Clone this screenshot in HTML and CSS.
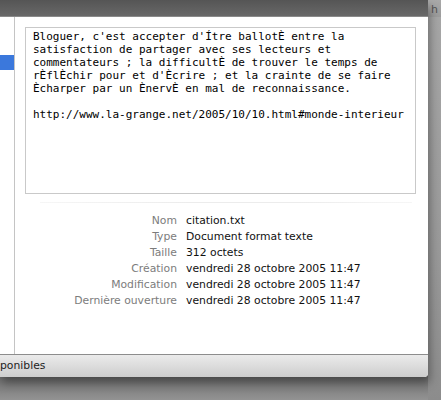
FILE: index.html
```html
<!DOCTYPE html>
<html lang="fr">
<head>
<meta charset="utf-8">
<title>Info citation.txt</title>
<link rel="stylesheet" href="styles.css">
</head>
<body>
<div class="screen">
  <div class="window">
    <div class="topbar"></div>
    <div class="content">
      <div class="sidebar">
        <div class="selection"></div>
      </div>
      <div class="pane">
        <div class="preview">Bloguer, c'est accepter d'Ítre ballotÈ entre la
satisfaction de partager avec ses lecteurs et
commentateurs ; la difficultÈ de trouver le temps de
rÈflÈchir pour et d'Ècrire ; et la crainte de se faire
Ècharper par un ÈnervÈ en mal de reconnaissance.

http://www.la-grange.net/2005/10/10.html#monde-interieur</div>
        <div class="separator"></div>
        <dl class="info">
          <dt>Nom</dt><dd>citation.txt</dd>
          <dt>Type</dt><dd>Document format texte</dd>
          <dt>Taille</dt><dd>312 octets</dd>
          <dt>Création</dt><dd>vendredi 28 octobre 2005 11:47</dd>
          <dt>Modification</dt><dd>vendredi 28 octobre 2005 11:47</dd>
          <dt>Dernière ouverture</dt><dd>vendredi 28 octobre 2005 11:47</dd>
        </dl>
      </div>
    </div>
    <div class="statusbar">ponibles</div>
  </div>
  <div class="behind">
    <div class="behind-title">h</div>
    <div class="behind-body"></div>
  </div>
</div>
</body>
</html>
```
FILE: styles.css
```css
html, body {
  margin: 0;
  padding: 0;
}
body {
  width: 441px;
  height: 400px;
  overflow: hidden;
  background: linear-gradient(#6f6f6f 0, #6f6f6f 377px, #7b7b7b 385px, #939393 400px);
  font-family: "DejaVu Sans", "Liberation Sans", sans-serif;
}
.screen {
  display: grid;
  grid-template-columns: 428px 13px;
  height: 400px;
}
.window {
  display: flex;
  flex-direction: column;
  height: 377px;
  background: #fff;
  border-bottom-right-radius: 4px;
  box-shadow: 2px 6px 10px rgba(0, 0, 0, 0.35);
  position: relative;
  z-index: 1;
}
.topbar {
  height: 17px;
  flex: none;
  background: linear-gradient(#555555, #686868);
  border-bottom: 1px solid #8a8a8a;
  box-sizing: border-box;
}
.content {
  flex: 1;
  display: flex;
  min-height: 0;
}
.sidebar {
  width: 14px;
  flex: none;
  border-right: 1px solid #c4c4c4;
  padding-top: 38px;
  box-sizing: content-box;
  background: #fff;
}
.selection {
  height: 15px;
  background: #3b78dc;
}
.pane {
  flex: 1;
  padding: 10px 12px 0 10px;
  display: flex;
  flex-direction: column;
}
.preview {
  height: 167px;
  box-sizing: border-box;
  border: 1px solid #c9c9c9;
  padding: 2px 7px;
  font-family: "DejaVu Sans Mono", "Liberation Mono", monospace;
  font-size: 11px;
  line-height: 13px;
  color: #000;
  white-space: pre;
  overflow: hidden;
}
.separator {
  height: 1px;
  margin: 8px 4px 0 15px;
  background: linear-gradient(90deg, #f6f6f6, #ececec 40%, #ececec 70%, #f6f6f6);
}
.info {
  margin: 10px 0 0 -10px;
  display: grid;
  grid-template-columns: 162px 1fr;
  column-gap: 9px;
  font-size: 10.8px;
  line-height: 16px;
}
.info dt {
  text-align: right;
  color: #7c7c7c;
}
.info dd {
  margin: 0;
  color: #111;
}
.statusbar {
  height: 23px;
  flex: none;
  box-sizing: border-box;
  border-top: 1px solid #8d8d8d;
  border-bottom-right-radius: 4px;
  background: linear-gradient(#ebebeb, #cdcdcd);
  font-size: 10.8px;
  line-height: 21px;
  color: #222;
}
.behind {
  display: flex;
  flex-direction: column;
}
.behind-title {
  height: 17px;
  background: linear-gradient(#a9a9a9, #9c9c9c);
  color: #555;
  font-size: 11px;
  line-height: 20px;
  padding-left: 3px;
  overflow: hidden;
  white-space: nowrap;
}
.behind-body {
  flex: 1;
  background: linear-gradient(#a6a6a6, #9a9a9a 60%, #8c8c8c);
}
```
